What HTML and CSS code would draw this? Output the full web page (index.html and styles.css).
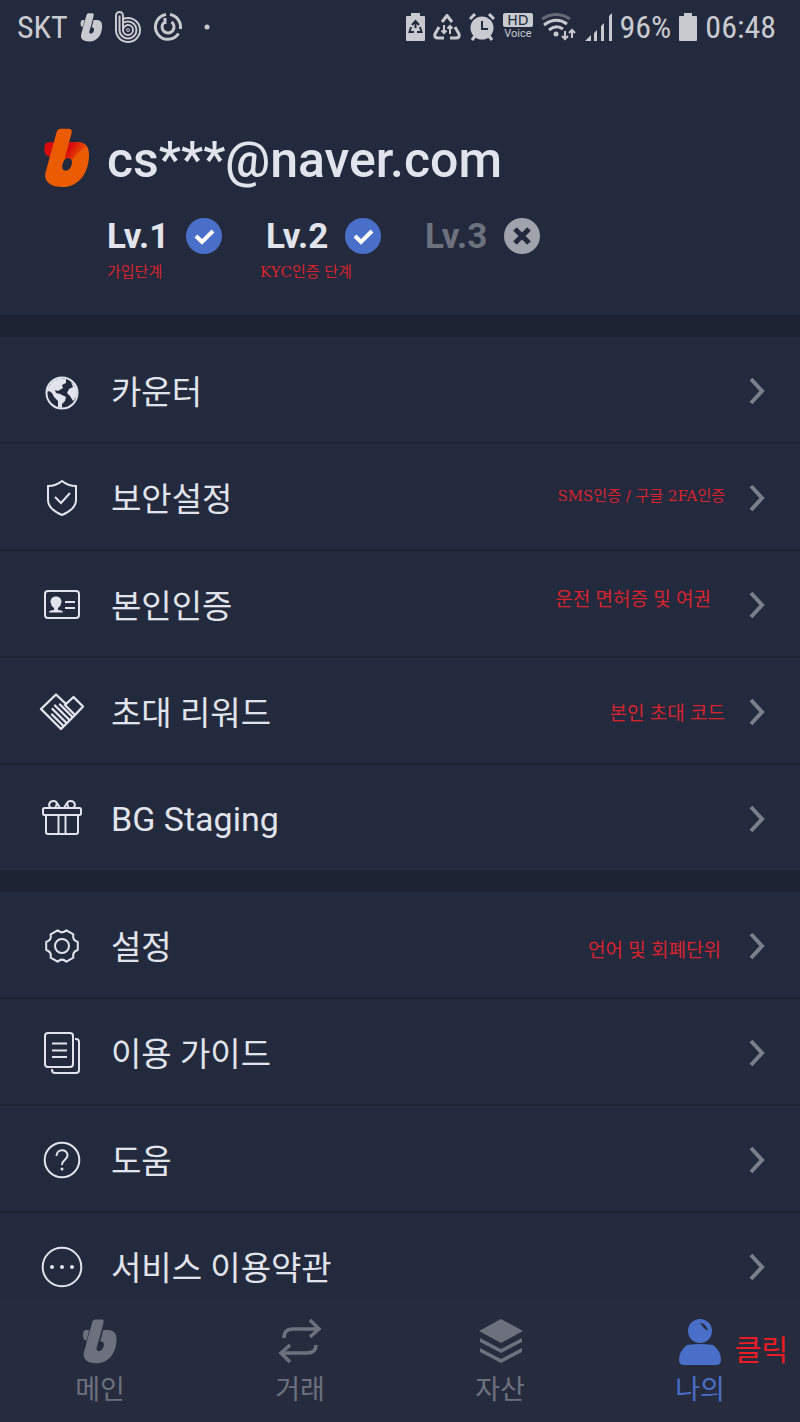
FILE: index.html
```html
<!DOCTYPE html>
<html lang="ko">
<head>
<meta charset="utf-8">
<meta name="viewport" content="width=device-width, initial-scale=1">
<title>나의</title>
<link rel="stylesheet" href="styles.css">
</head>
<body>
<svg class="defs" aria-hidden="true">
  <symbol id="b-mark" viewBox="42 54 138 180">
    <path fill="currentColor" d="M55 98H68L58 140Q42 140 43 116Q44 98 55 98Z"/>
    <path fill="currentColor" fill-rule="evenodd" d="M92 56H116Q128 57 125 69L109 130L102 154L98 166C95 180 103 184 109 182C123 180 128 162 126 152C125 145 118 142 112 145L124 98H146Q177 100 177 134C177 190 145 231 97 231C58 231 40 212 47 186L80 66Q83 56 92 56Z"/>
  </symbol>
  <symbol id="chevron" viewBox="0 0 16 28"><path d="M2 2L13 14L2 26" fill="none" stroke="currentColor" stroke-width="4"/></symbol>
</svg>

<header class="status">
  <div class="status-group status-left">
    <span>SKT</span>
    <svg width="23" height="29"><use href="#b-mark"/></svg>
    <svg class="line" width="26" height="32" viewBox="0 0 26 32"><path stroke-width="2" d="M8 12V4.500a3.500 3.500 0 0 0-7 0V19a12 12 0 1 0 12-12Q10 7 8 8M4.500 4.500V19a8.500 8.500 0 1 0 8.500-8.500Q10 10.500 8 12V19a5 5 0 1 0 5-5Q10 14 8 18"/><circle cx="13" cy="19" r="1.500"/></svg>
    <svg class="line" width="30" height="30" viewBox="0 0 30 30"><path stroke-width="3" d="M17 2.500A12.500 12.500 0 0 1 27.300 17M25.500 21.500A12.500 12.500 0 1 1 13 2.500"/><path stroke-width="3" d="M18.500 10A6 6 0 1 1 11 10.500M12 6V12"/></svg>
    <svg class="status-dot" width="6" height="6"><circle cx="3" cy="3" r="2.500" fill="currentColor"/></svg>
  </div>
  <div class="status-group status-right">
    <svg width="19" height="28" viewBox="0 0 19 28"><path fill="currentColor" d="M5 0H14V3H18Q19 3 19 4V27Q19 28 18 28H1Q0 28 0 27V4Q0 3 1 3H5Z"/><path fill="none" stroke="#242a3d" stroke-width="2" d="M6 12L9.500 8L13 12M9.500 9V15M5 14L3.500 19H8M14 14L15.500 19H11"/></svg>
    <svg class="line" width="28" height="26" viewBox="0 0 28 26"><path stroke-width="3" d="M9 8L14 1.500L19 8M6 13L2 20Q1 24 5 24H11M22 13L26 20Q27 24 23 24H17"/><path stroke-width="2" d="M11 11V19M8.500 16.500L11 19L13.500 16.500M17 20V12M14.500 14.500L17 12L19.500 14.500"/></svg>
    <svg width="26" height="28" viewBox="0 0 26 28"><circle cx="13" cy="15" r="11.500" fill="currentColor"/><path fill="none" stroke="currentColor" stroke-width="3" d="M1 6L6 1M25 6L20 1M6 23L3 27M20 23L23 27"/><path fill="none" stroke="#242a3d" stroke-width="2" d="M13 8V16H19"/></svg>
    <svg width="30" height="30" viewBox="0 0 30 30"><rect y="1" width="30" height="14" rx="2" fill="currentColor"/><text x="15" y="13" class="hd">HD</text><text x="15" y="25" class="voice">Voice</text></svg>
    <svg class="line" width="36" height="28" viewBox="0 0 36 28"><g stroke-width="3"><path opacity=".4" d="M1 6Q15-3 29 6"/><path d="M3 12Q15 3 26 11M8 17Q15 11 22 16"/></g><circle cx="15" cy="21" r="2.500" fill="currentColor" stroke="none"/><path stroke-width="2" d="M24 18V26M21 23L24 26L27 23M31 25V17M28 20L31 17L34 20"/></svg>
    <svg width="27" height="28" viewBox="0 0 27 28"><path fill="currentColor" d="M0 28L6 22V28ZM9 20L12 17V28H9ZM16 13L19 10V28H16ZM24 3L27 0V28H24Z"/></svg>
    <span>96%</span>
    <svg width="18" height="28" viewBox="0 0 18 28"><path fill="currentColor" d="M5 0H13V3H17Q18 3 18 4V27Q18 28 17 28H1Q0 28 0 27V4Q0 3 1 3H5Z"/></svg>
    <span>06:48</span>
  </div>
</header>

<main class="content">
  <section class="profile">
    <svg class="profile-logo" viewBox="42 54 138 180" aria-hidden="true">
      <defs><linearGradient id="fold" x1="112" y1="105" x2="160" y2="135" gradientUnits="userSpaceOnUse"><stop offset=".2" stop-color="#d90b0b"/><stop offset="1" stop-color="#ea5b02"/></linearGradient></defs>
      <path fill="#d90b0b" d="M55 97H75L60 140Q42 138 43 116Q44 97 55 97Z"/>
      <path fill="#ea5b02" fill-rule="evenodd" d="M92 56H116Q128 57 125 69L117 97H146Q177 99 177 134C177 190 145 231 97 231C58 231 40 212 47 186L80 66Q83 56 92 56ZM113 144Q101 145 97 166Q95 182 108 182Q123 180 126 158Q127 144 113 144Z"/>
      <path fill="url(#fold)" d="M117 97H146Q164 98 172 112Q154 116 126 150Q123 143 113 144L104 147Z"/>
    </svg>
    <div class="profile-info">
      <h1 class="email">cs***@naver.com</h1>
      <ul class="levels">
        <li class="level">
          <div class="level-row">Lv.1 <svg class="badge" viewBox="0 0 36 36"><circle cx="18" cy="18" r="18" fill="#4a6fc8"/><path d="M10 18L16 24L27 13" fill="none" stroke="#fff" stroke-width="4"/></svg></div>
          <span class="note">가입단계</span>
        </li>
        <li class="level">
          <div class="level-row">Lv.2 <svg class="badge" viewBox="0 0 36 36"><circle cx="18" cy="18" r="18" fill="#4a6fc8"/><path d="M10 18L16 24L27 13" fill="none" stroke="#fff" stroke-width="4"/></svg></div>
          <span class="note note-wide">KYC인증 단계</span>
        </li>
        <li class="level level-off">
          <div class="level-row">Lv.3 <svg class="badge" viewBox="0 0 36 36"><circle cx="18" cy="18" r="18" fill="#a0a3ac"/><path d="M11 11L25 25M25 11L11 25" stroke="#242a3d" stroke-width="5"/></svg></div>
        </li>
      </ul>
    </div>
  </section>

  <nav class="menu">
    <a class="row" href="#counter">
      <svg class="icon" viewBox="0 0 48 48"><circle cx="24" cy="26" r="15.500"/><path class="solid" d="M9 25Q11 14 22 11L28 12L28 16L24 18L25 21L20 24L17 23L18 26L22 27L28 30L27 34L24 37V41L20 40L20 34L16 30L14 26L11 24ZM33 15Q39 19 39 26Q38 32 35 34L32 29L29 26L31 22L35 20Z"/></svg>
      <span class="label">카운터</span><svg class="chevron"><use href="#chevron"/></svg>
    </a>
    <a class="row" href="#security">
      <svg class="icon" viewBox="0 0 48 48"><path d="M24 7Q30 12 38 12V26Q38 35 24 41Q10 35 10 26V12Q18 12 24 7ZM17 23L23 29L32 19"/></svg>
      <span class="label">보안설정</span><span class="note note-small">SMS인증 / 구글 2FA인증</span><svg class="chevron"><use href="#chevron"/></svg>
    </a>
    <a class="row" href="#identity">
      <svg class="icon" viewBox="0 0 48 48"><rect x="7" y="10" width="34" height="27" rx="3"/><path class="solid" d="M18 15.500C22 15.500 23.500 18 23.500 21Q23 25 20 27V29Q25 29 25 31.500H11Q11 29 16 29V27Q13 25 12.500 21C12.500 18 14 15.500 18 15.500Z"/><path d="M27 21H37M27 27H37"/></svg>
      <span class="label">본인인증</span><span class="note note-large note-raised">운전 면허증 및 여권</span><svg class="chevron"><use href="#chevron"/></svg>
    </a>
    <a class="row" href="#reward">
      <svg class="icon" viewBox="0 0 48 48"><path stroke-width="2.400" stroke-linejoin="round" stroke-linecap="round" d="M28 16L18 6.500L3 21L23 41L38 26M27 17L35.500 9L45 18.500L37 27L27 17M22 16.500L34 28.500M17 17.500L31 31.500M14.500 21L28 34.500M14 26.500L25 37.500"/></svg>
      <span class="label">초대 리워드</span><span class="note note-large">본인 초대 코드</span><svg class="chevron"><use href="#chevron"/></svg>
    </a>
    <a class="row" href="#staging">
      <svg class="icon" viewBox="0 0 48 48"><rect x="5" y="13" width="38" height="7" rx="1.500"/><path d="M8 20V37Q8 39 10 39H38Q40 39 40 37V20M20.500 20V39M27.500 20V39M14 13C9 12 11 6 15.500 6C19 6 20 9 17 13M34 13C39 12 37 6 32.500 6C29 6 28 9 31 13M19 8L22 13M29 8L26 13"/></svg>
      <span class="label label-latin">BG Staging</span><svg class="chevron"><use href="#chevron"/></svg>
    </a>
  </nav>

  <nav class="menu">
    <a class="row" href="#settings">
      <svg class="icon" viewBox="-24 -24 48 48"><circle r="7"/><path stroke-linejoin="round" d="M15.800-4V4Q10 5.800 11.400 11.700L4.400 15.700Q0 11.500-4.400 15.700L-11.400 11.700Q-10 5.800-15.800 4V-4Q-10-5.800-11.400-11.700L-4.400-15.700Q0-11.500 4.400-15.700L11.400-11.700Q10-5.800 15.800-4Z"/></svg>
      <span class="label">설정</span><span class="note note-large note-lowered">언어 및 회폐단위</span><svg class="chevron"><use href="#chevron"/></svg>
    </a>
    <a class="row" href="#guide">
      <svg class="icon" viewBox="0 0 48 48"><rect x="7" y="4" width="28" height="34" rx="3"/><path d="M37 10H38Q41 10 41 13V41Q41 44 38 44H17Q14 44 14 41V40M14 14.500H29M14 21.500H29M14 28H29"/></svg>
      <span class="label">이용 가이드</span><svg class="chevron"><use href="#chevron"/></svg>
    </a>
    <a class="row" href="#help">
      <svg class="icon" viewBox="0 0 48 48"><circle cx="24" cy="24" r="17.300"/><path d="M18.500 20C18.500 12.500 29.500 12.500 29.500 19.500C29.500 23.500 24 23.500 24 29"/><circle class="solid" cx="24" cy="33" r="1.500"/></svg>
      <span class="label">도움</span><svg class="chevron"><use href="#chevron"/></svg>
    </a>
    <a class="row" href="#terms">
      <svg class="icon" viewBox="0 0 48 48"><circle cx="24" cy="24" r="19.300"/><g class="solid"><circle cx="14" cy="24" r="2"/><circle cx="24" cy="24" r="2"/><circle cx="34" cy="24" r="2"/></g></svg>
      <span class="label">서비스 이용약관</span><svg class="chevron"><use href="#chevron"/></svg>
    </a>
  </nav>
</main>

<nav class="tabs">
  <a class="tab" href="#main"><svg class="tab-icon" viewBox="0 0 48 48"><use href="#b-mark" x="6" y="2" width="36" height="45"/></svg>메인</a>
  <a class="tab" href="#trade"><svg class="tab-icon" viewBox="0 0 48 48"><path fill="none" stroke="currentColor" stroke-width="3.500" d="M8 21Q8 12 17 12H42M34 3L43 12L34 20M40 28Q40 36 31 36H6M14 28L5 36L14 45"/></svg>거래</a>
  <a class="tab" href="#assets"><svg class="tab-icon" viewBox="0 0 48 48"><path fill="currentColor" d="M25 2L47 14L25 26L3 14ZM4 21L25 32L46 21V25L25 36L4 25ZM4 31L25 42L46 31V35L25 46L4 35Z"/></svg>자산</a>
  <a class="tab tab-active" href="#my" aria-current="page"><svg class="tab-icon" viewBox="0 0 48 48"><path fill="currentColor" d="M11 28Q24 26 37 28Q45 34 45 43Q45 48 40 48H8Q3 48 3 43Q3 34 11 28Z"/><circle cx="24" cy="14" r="12" fill="currentColor"/><path d="M24 6Q30 6 32 14Q27 11 24 6Z" fill="#262c3e"/></svg>나의<span class="click-note">클릭</span></a>
</nav>
</body>
</html>
```
FILE: styles.css
```css
* {
  box-sizing: border-box;
}

body {
  margin: 0;
  height: 100vh;
  display: flex;
  flex-direction: column;
  background: #242a3d;
  color: #e1e4ec;
  font-family: Roboto, "Noto Sans CJK KR", sans-serif;
}

a {
  color: inherit;
  text-decoration: none;
}

.defs {
  position: absolute;
  width: 0;
  height: 0;
}

.status {
  display: flex;
  justify-content: space-between;
  align-items: center;
  flex: none;
  height: 54px;
  padding: 0 24px 0 17px;
  color: #c9cad0;
  font-family: "Roboto Condensed", Roboto, sans-serif;
  font-size: 32px;
}

.status-group {
  display: flex;
  align-items: center;
}

.status-left {
  gap: 12px;
}

.status-right {
  gap: 8px;
}

.status-dot {
  margin-left: 9px;
}

.line {
  fill: none;
  stroke: currentColor;
}

.hd,
.voice {
  text-anchor: middle;
}

.hd {
  fill: #242a3d;
  font-family: "DejaVu Sans", sans-serif;
  font-size: 14px;
}

.voice {
  fill: currentColor;
  font-family: Roboto, sans-serif;
  font-size: 11px;
}

.content {
  flex: 1;
  min-height: 0;
  overflow: hidden;
}

.profile {
  display: flex;
  gap: 17px;
  min-height: 261px;
  padding: 74px 24px 32px 44px;
}

.profile-logo {
  flex: none;
  width: 46px;
  height: 60px;
}

.profile-info {
  flex: 1;
}

.email {
  margin: 0;
  font-size: 50px;
  font-weight: 500;
  line-height: 64px;
}

.levels {
  display: flex;
  margin: 26px 0 0;
  padding: 0;
  list-style: none;
}

.level {
  display: flex;
  flex-direction: column;
  gap: 8px;
  width: 159px;
}

.level-row {
  display: flex;
  align-items: center;
  gap: 17px;
  height: 36px;
  font-size: 35px;
  font-weight: 700;
}

.level-off .level-row {
  color: #6d717e;
}

.badge {
  width: 36px;
  height: 36px;
}

.note {
  color: #d8232f;
  font-family: "DejaVu Serif", "Noto Sans CJK KR", serif;
  font-size: 15px;
  line-height: 20px;
  white-space: nowrap;
}

.note-small {
  padding-bottom: 4px;
}

.note-wide {
  margin-left: -6px;
}

.note-large {
  font-family: "Noto Sans CJK KR", serif;
  font-size: 19px;
}

.note-raised {
  margin-right: 14px;
  padding-bottom: 14px;
}

.note-lowered {
  margin-right: 4px;
  padding-top: 6px;
}

.menu {
  border-top: 22px solid #1e2333;
}

.row {
  display: flex;
  align-items: center;
  height: 107px;
  padding: 3px 35px 0 38px;
  border-bottom: 2px solid #1e2333;
}

.row:last-child {
  height: 105px;
  border-bottom: 0;
}

.icon {
  flex: none;
  width: 48px;
  height: 48px;
  margin-right: 25px;
  fill: none;
  stroke: currentColor;
  stroke-width: 2;
}

.solid {
  fill: currentColor;
  stroke: none;
}

.label {
  flex: 1;
  padding-top: 4px;
  font-size: 33px;
  line-height: 48px;
}

.label-latin {
  padding-top: 0;
  font-size: 34px;
}

.chevron {
  flex: none;
  width: 16px;
  height: 28px;
  margin-left: 24px;
  color: #7b7f8b;
}

.tabs {
  display: grid;
  grid-template-columns: repeat(4, 1fr);
  flex: none;
  padding: 19px 0 12px;
  background: #262c3e;
  color: #6d717e;
}

.tab {
  position: relative;
  display: flex;
  flex-direction: column;
  align-items: center;
  gap: 5px;
  font-size: 27px;
  line-height: 40px;
}

.tab-icon {
  width: 48px;
  height: 48px;
}

.tab-active {
  color: #4a6fc8;
}

.click-note {
  position: absolute;
  top: 14px;
  right: 12px;
  color: #ec1c24;
  font-size: 29px;
}
```
